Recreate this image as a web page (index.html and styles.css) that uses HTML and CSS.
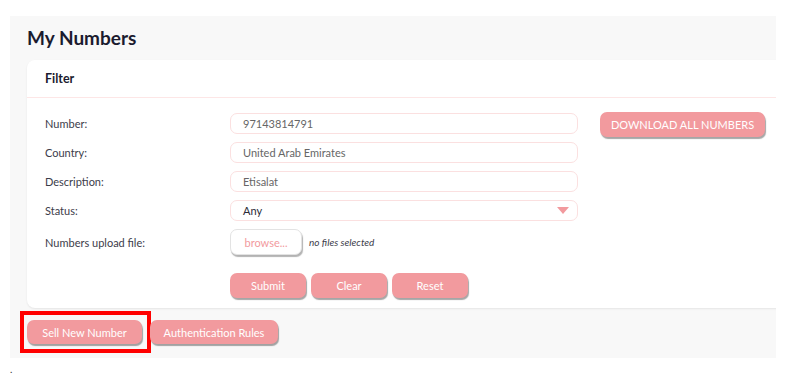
FILE: index.html
```html
<!DOCTYPE html>
<html lang="en">
<head>
    <meta charset="UTF-8">
    <meta name="viewport" content="width=device-width, initial-scale=1.0">
    <title>My Numbers</title>
    <link rel="stylesheet" href="styles.css">
</head>
<body>
    <div class="page">
        <div class="panel">
            <h1>My Numbers</h1>

            <div class="card">
                <div class="card-header">Filter</div>
                <div class="card-body">
                    <div class="fields">
                        <div class="form-row">
                            <label for="number">Number:</label>
                            <input type="text" id="number" class="field" value="97143814791">
                        </div>
                        <div class="form-row">
                            <label for="country">Country:</label>
                            <input type="text" id="country" class="field" value="United Arab Emirates">
                        </div>
                        <div class="form-row">
                            <label for="description">Description:</label>
                            <input type="text" id="description" class="field" value="Etisalat">
                        </div>
                        <div class="form-row">
                            <label for="status">Status:</label>
                            <div class="field select">
                                <span>Any</span>
                                <span class="caret"></span>
                            </div>
                        </div>
                        <div class="form-row upload-row">
                            <label>Numbers upload file:</label>
                            <div class="upload">
                                <button class="browse" type="button">browse...</button>
                                <span class="no-file">no files selected</span>
                            </div>
                        </div>
                        <div class="form-row actions">
                            <span></span>
                            <div class="buttons">
                                <button class="btn btn-small" type="submit">Submit</button>
                                <button class="btn btn-small" type="button">Clear</button>
                                <button class="btn btn-small" type="button">Reset</button>
                            </div>
                        </div>
                    </div>
                    <div class="side">
                        <button class="btn btn-download" type="button">DOWNLOAD ALL NUMBERS</button>
                    </div>
                </div>
            </div>

            <div class="bottom-buttons">
                <div class="highlight">
                    <button class="btn btn-sell" type="button">Sell New Number</button>
                </div>
                <button class="btn btn-auth" type="button">Authentication Rules</button>
            </div>
        </div>
        <span class="dot">.</span>
    </div>
</body>
</html>
```

FILE: styles.css
```css
body {
    font-family: Lato, "Open Sans", sans-serif;
    margin: 0;
    padding: 0;
    color: #3c3c4a;
    background: #fff;
}
.page {
    padding: 16px 17px 0 10px;
}
.panel {
    background-color: #f8f8f8;
    padding: 0 0 5px 17px;
    overflow: hidden;
}
h1 {
    margin: 0;
    padding: 10px 0 10px 0;
    font-size: 19px;
    line-height: 24px;
    font-weight: 700;
    color: #1b1b2f;
}
.card {
    background-color: #fff;
    border-radius: 8px 0 0 8px;
    margin-right: -10px;
    box-shadow: 0 1px 2px rgba(0, 0, 0, 0.08);
}
.card-header {
    height: 37px;
    line-height: 37px;
    padding-left: 18px;
    font-size: 12.5px;
    font-weight: 700;
    color: #1b1b2f;
    border-bottom: 1px solid #fde6e6;
}
.card-body {
    display: flex;
    padding: 15px 18px 10px 18px;
}
.fields {
    display: flex;
    flex-direction: column;
    gap: 8px;
}
.form-row {
    display: grid;
    grid-template-columns: 185px 348px;
    align-items: center;
}
.form-row label {
    font-size: 11px;
    color: #3c3c4a;
}
.field {
    box-sizing: border-box;
    height: 21px;
    border: 1px solid #fbe0e0;
    border-radius: 7px;
    padding: 0 12px;
    font-family: inherit;
    font-size: 11px;
    color: #666;
    background: #fff;
    outline: none;
}
.select {
    display: flex;
    align-items: center;
    justify-content: space-between;
    color: #2b2b38;
}
.caret {
    width: 0;
    height: 0;
    border-left: 6px solid transparent;
    border-right: 6px solid transparent;
    border-top: 7px solid #f29a9e;
    margin-right: -4px;
}
.upload {
    display: flex;
    align-items: center;
    gap: 7px;
}
.browse {
    width: 72px;
    height: 26px;
    background: #fff;
    border: 1px solid #e3e3e3;
    border-radius: 7px;
    box-shadow: 1px 2px 1px rgba(0, 0, 0, 0.3);
    color: #f29a9e;
    font-family: inherit;
    font-size: 11px;
    padding: 0;
}
.no-file {
    font-size: 10px;
    font-style: italic;
    color: #3c3c4a;
}
.actions {
    margin-top: 10px;
}
.buttons {
    display: flex;
    gap: 5px;
}
.btn {
    background-color: #f29a9e;
    color: #fff;
    border: none;
    border-radius: 7px;
    box-shadow: 1px 2px 1px rgba(0, 0, 0, 0.35);
    font-family: inherit;
    font-size: 11px;
    padding: 0;
    cursor: pointer;
}
.btn-small {
    width: 76px;
    height: 25px;
}
.side {
    padding-left: 22px;
}
.btn-download {
    width: 165px;
    height: 25px;
    margin-top: -1px;
}
.bottom-buttons {
    display: flex;
    align-items: center;
    margin-top: 3px;
}
.highlight {
    border: 4px solid #ff0000;
    padding: 5px 5px 5px 3px;
    margin-left: -7px;
}
.btn-sell {
    display: block;
    width: 115px;
    height: 24px;
}
.btn-auth {
    width: 128px;
    height: 24px;
    margin-left: -1px;
}
.dot {
    display: block;
    font-size: 10px;
    line-height: 12px;
    margin-top: 5px;
    color: #333;
}
```
